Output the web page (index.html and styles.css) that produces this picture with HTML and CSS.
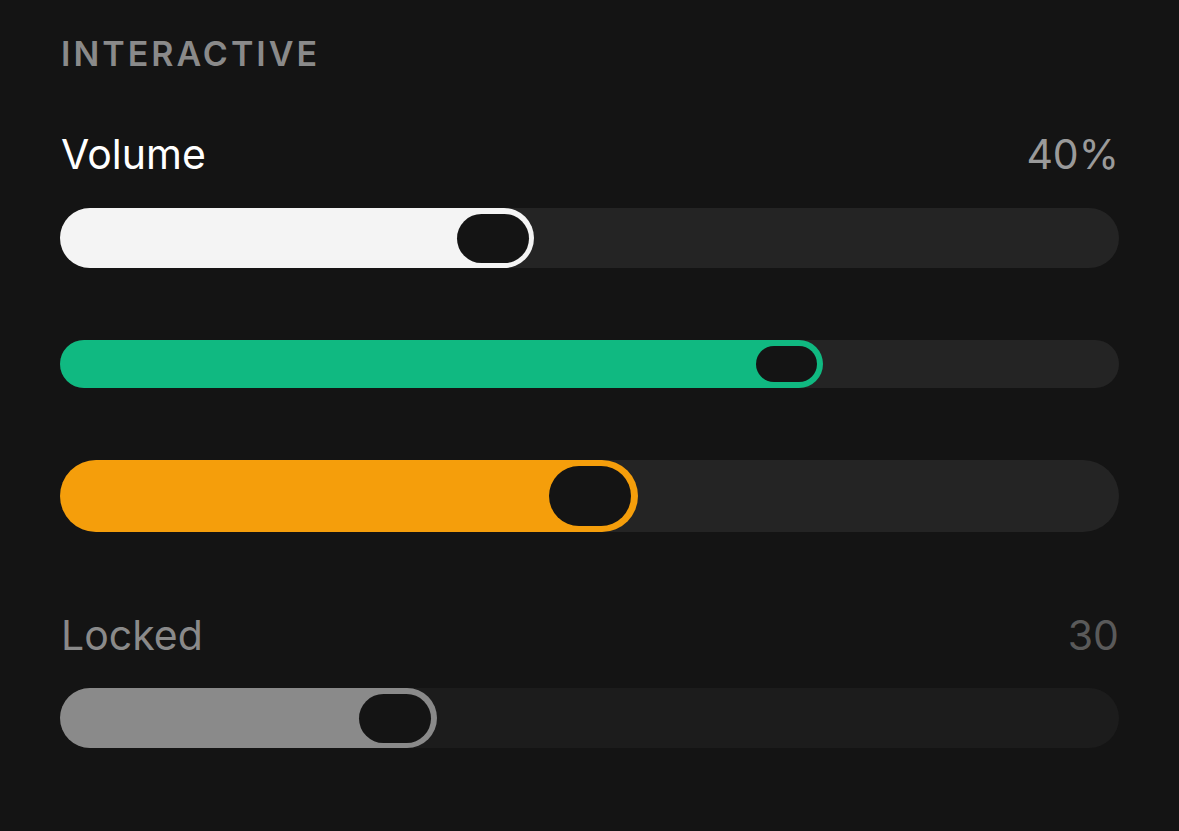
FILE: index.html
```html
<!DOCTYPE html>
<html lang="en">

<head>
    <meta charset="UTF-8">
    <meta name="viewport" content="width=device-width, initial-scale=1.0">
    <title>Sliders</title>
    <link rel="stylesheet" href="styles.css">
</head>

<body>
    <div class="panel">
        <h2 class="panel-title">INTERACTIVE</h2>

        <div class="slider-group">
            <div class="slider-head">
                <span class="slider-name">Volume</span>
                <span class="slider-value">40%</span>
            </div>
            <div class="track track-md">
                <div class="fill fill-white" style="width: 474px"><div class="thumb"></div></div>
            </div>
        </div>

        <div class="slider-group slider-bare">
            <div class="track track-sm">
                <div class="fill fill-green" style="width: 763px"><div class="thumb"></div></div>
            </div>
        </div>

        <div class="slider-group slider-bare">
            <div class="track track-lg">
                <div class="fill fill-orange" style="width: 578px"><div class="thumb"></div></div>
            </div>
        </div>

        <div class="slider-group slider-locked">
            <div class="slider-head">
                <span class="slider-name">Locked</span>
                <span class="slider-value">30</span>
            </div>
            <div class="track track-md">
                <div class="fill fill-gray" style="width: 377px"><div class="thumb"></div></div>
            </div>
        </div>
    </div>
</body>

</html>
```

FILE: styles.css
```css
html,
body {
    margin: 0;
    background-color: #141414;
}

body {
    font-family: Inter, "Noto Sans", sans-serif;
}

.panel {
    padding: 34px 62px 0 60px;
}

.panel-title {
    margin: 0;
    font-size: 34px;
    line-height: 40px;
    font-weight: 600;
    letter-spacing: 3px;
    color: #8a8a8a;
    padding-left: 1px;
}

.slider-group {
    margin-top: 55px;
}

.slider-group.slider-bare {
    margin-top: 72px;
}

.slider-group.slider-locked {
    margin-top: 78px;
}

.slider-head {
    display: flex;
    justify-content: space-between;
    align-items: baseline;
    padding: 0 0 0 1px;
    margin: 0 -2px 29px 0;
    font-size: 41px;
    line-height: 50px;
}

.slider-name {
    color: #ffffff;
}

.slider-value {
    color: #9a9a9a;
}

.slider-locked .slider-head {
    margin-bottom: 28px;
}

.slider-locked .slider-name {
    color: #8a8a8a;
}

.slider-locked .slider-value {
    color: #5a5a5a;
}

.track {
    display: flex;
    margin-right: -2px;
    background-color: #242424;
    border-radius: 999px;
}

.slider-locked .track {
    background-color: #1c1c1c;
}

.track-sm {
    height: 48px;
}

.track-md {
    height: 60px;
}

.track-lg {
    height: 72px;
}

.fill {
    display: flex;
    justify-content: flex-end;
    align-items: center;
    box-sizing: border-box;
    padding: 5px;
    border-radius: 999px;
}

.fill-white {
    background-color: #f4f4f4;
}

.fill-green {
    background-color: #10b981;
    padding: 6px;
}

.fill-orange {
    background-color: #f59e0b;
    padding: 6px 7px 6px 6px;
}

.fill-gray {
    background-color: #8a8a8a;
    padding: 5px 6px 5px 5px;
}

.thumb {
    background-color: #141414;
    border-radius: 999px;
}

.track-sm .thumb {
    width: 61px;
    height: 36px;
}

.track-md .thumb {
    width: 72px;
    height: 49px;
}

.track-lg .thumb {
    width: 82px;
    height: 60px;
}
```
